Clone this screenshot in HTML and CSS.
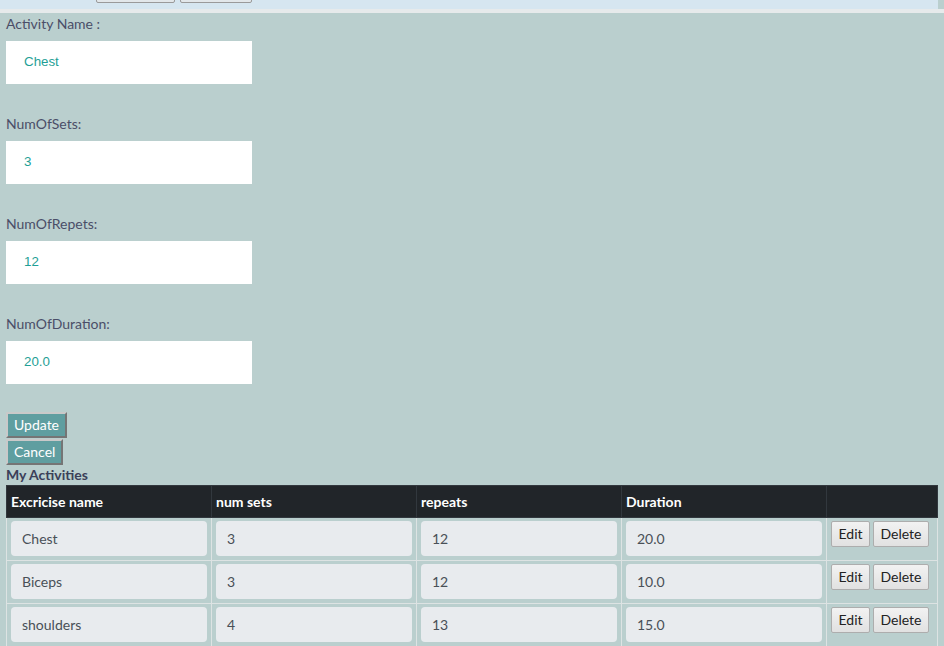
FILE: index.html
```html
<!DOCTYPE html>
<html>
<head>
<meta charset="utf-8">
<link rel="stylesheet" href="styles.css">
</head>
<body>
<div class="topbar">
  <div class="topbar-inner">
    <div class="top-buttons">
      <button class="top-btn top-btn-a" aria-label="Home"></button>
      <button class="top-btn top-btn-b" aria-label="Logout"></button>
    </div>
  </div>
  <div class="topbar-edge"></div>
</div>
<div class="strip"></div>
<main class="page">
  <form class="edit-form">
    <div class="field">
      <label class="field-label">Activity Name :</label>
      <input class="field-input" type="text" value="Chest">
    </div>
    <div class="field">
      <label class="field-label">NumOfSets:</label>
      <input class="field-input" type="text" value="3">
    </div>
    <div class="field">
      <label class="field-label">NumOfRepets:</label>
      <input class="field-input" type="text" value="12">
    </div>
    <div class="field field-last">
      <label class="field-label">NumOfDuration:</label>
      <input class="field-input" type="text" value="20.0">
    </div>
    <div class="form-actions">
      <button type="button" class="act-btn">Update</button>
      <button type="button" class="act-btn">Cancel</button>
    </div>
  </form>
  <h3 class="section-title">My Activities</h3>
  <table class="activities">
    <thead>
      <tr>
        <th class="col">Excricise name</th>
        <th class="col">num sets</th>
        <th class="col">repeats</th>
        <th class="col">Duration</th>
        <th class="col-actions"></th>
      </tr>
    </thead>
    <tbody>
      <tr>
        <td><div class="cell-box">Chest</div></td>
        <td><div class="cell-box">3</div></td>
        <td><div class="cell-box">12</div></td>
        <td><div class="cell-box">20.0</div></td>
        <td class="actions"><button class="row-btn">Edit</button><button class="row-btn">Delete</button></td>
      </tr>
      <tr>
        <td><div class="cell-box">Biceps</div></td>
        <td><div class="cell-box">3</div></td>
        <td><div class="cell-box">12</div></td>
        <td><div class="cell-box">10.0</div></td>
        <td class="actions"><button class="row-btn">Edit</button><button class="row-btn">Delete</button></td>
      </tr>
      <tr>
        <td><div class="cell-box">shoulders</div></td>
        <td><div class="cell-box">4</div></td>
        <td><div class="cell-box">13</div></td>
        <td><div class="cell-box">15.0</div></td>
        <td class="actions"><button class="row-btn">Edit</button><button class="row-btn">Delete</button></td>
      </tr>
    </tbody>
  </table>
</main>
</body>
</html>
```
FILE: styles.css
```css
html, body {
  margin: 0;
  padding: 0;
}
body {
  background: #bacfce;
  font-family: "Segoe UI", Lato, "Noto Sans", sans-serif;
  font-size: 14px;
  line-height: 21px;
  color: #4a4e68;
  overflow: hidden;
}
.topbar {
  display: flex;
  height: 9px;
}
.topbar-inner {
  flex: 0 0 938px;
  background: #d6e6f0;
}
.topbar-edge {
  flex: 1;
  background: #bacfce;
}
.top-buttons {
  display: flex;
  align-items: flex-end;
  height: 3px;
  overflow: hidden;
  padding-left: 96px;
  gap: 5px;
}
.top-btn {
  flex: none;
  height: 20px;
  margin: 0;
  border: 1px solid #9a9a9a;
  border-radius: 2px;
  background: #e2e7ea;
  padding: 0;
}
.top-btn-a { width: 79px; }
.top-btn-b { width: 72px; }
.strip {
  height: 4px;
  background: #e6eaeb;
}
.page {
  padding: 0 6px;
}
.edit-form {
  margin: 0;
}
.field {
  display: flex;
  flex-direction: column;
  align-items: flex-start;
  margin-bottom: 29px;
}
.field-last {
  margin-bottom: 28px;
}
.field-label {
  display: block;
  font-size: 14px;
  line-height: 21px;
  color: #4a4e68;
  margin-bottom: 7px;
}
.field-input {
  box-sizing: border-box;
  width: 246px;
  height: 43px;
  border: none;
  background: #fff;
  padding: 0 18px 2px 18px;
  font-family: "Liberation Sans", Arial, sans-serif;
  font-size: 13.333px;
  color: #1f9f96;
  outline: none;
}
.form-actions {
  display: flex;
  flex-direction: column;
  align-items: flex-start;
  gap: 1px;
}
.act-btn {
  box-sizing: border-box;
  height: 26px;
  margin: 0;
  padding: 0 6px;
  background: #5f9ea0;
  color: #fff;
  border: 2px outset #c9c9c9;
  font-family: "Segoe UI", Lato, "Noto Sans", sans-serif;
  font-size: 14px;
  line-height: 20px;
}
.section-title {
  margin: 0;
  font-size: 14px;
  line-height: 20px;
  font-weight: 700;
  color: #3b4059;
}
.activities {
  width: 932px;
  border-collapse: collapse;
  table-layout: fixed;
}
.activities th {
  background: #212529;
  color: #fff;
  font-weight: 700;
  text-align: left;
  padding: 5px 4px;
  line-height: 21px;
  border: 1px solid #32383e;
  font-size: 14px;
}
.activities th.col { width: 196px; }
.activities th.col-actions { width: auto; }
.activities td {
  border: 1px solid #dde3e3;
  padding: 3px 4px 4px 4px;
  vertical-align: top;
}
.cell-box {
  box-sizing: border-box;
  height: 35px;
  padding: 7px 11px 6px 11px;
  background: #e8ebee;
  border-radius: 4px;
  color: #495057;
  font-size: 14px;
  line-height: 22px;
}
.actions {
  white-space: nowrap;
}
.row-btn {
  box-sizing: border-box;
  height: 26px;
  margin: 0 3px 0 0;
  padding: 0 6.5px;
  border: 1px solid #adadad;
  border-radius: 2px;
  background: linear-gradient(#f2f2f2, #e1e1e1);
  color: #222;
  font-family: "Segoe UI", Lato, "Noto Sans", sans-serif;
  font-size: 14px;
  line-height: 22px;
}
```
